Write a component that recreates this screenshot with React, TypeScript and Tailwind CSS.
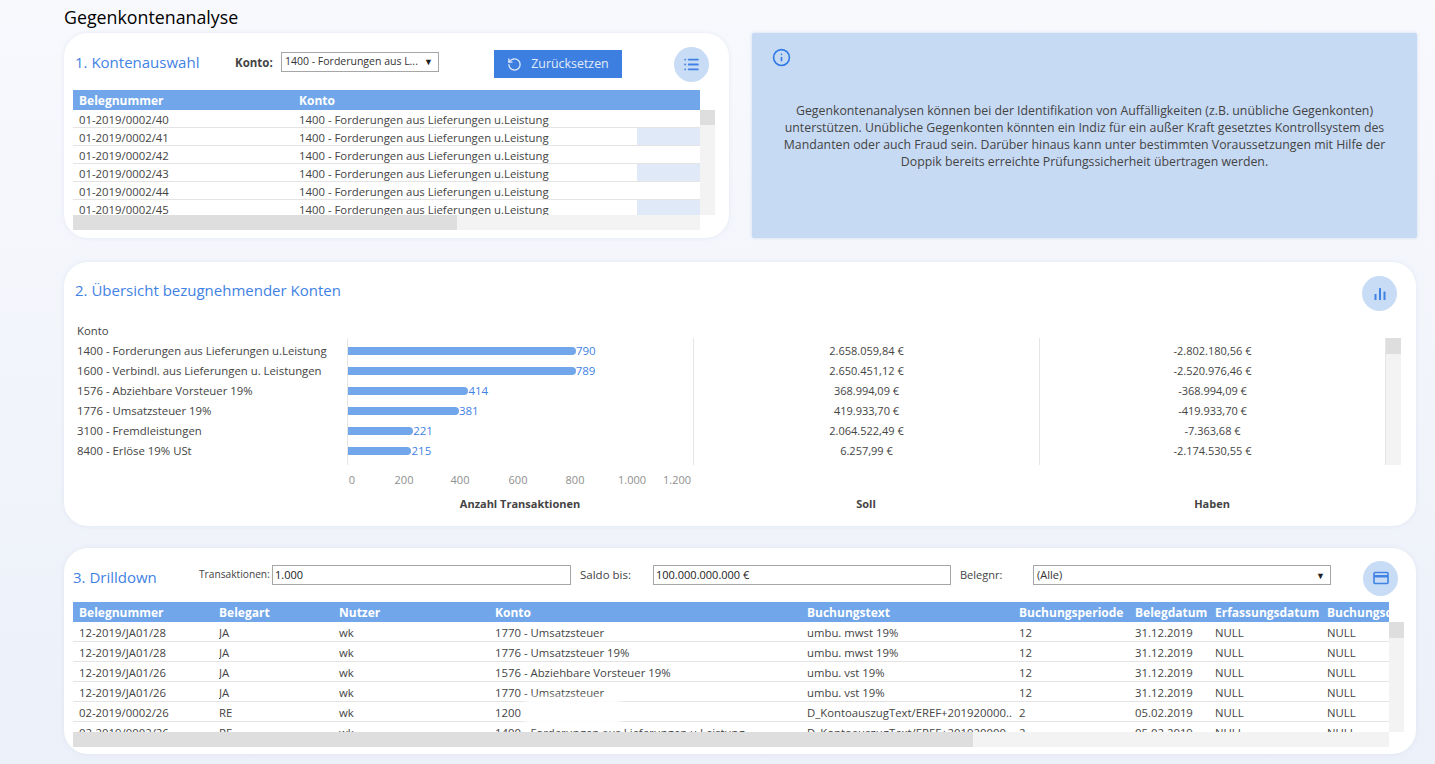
import { Info, List, RotateCcw } from "lucide-react";

const belege = ["40", "41", "42", "43", "44", "45"];

const konten = [
  { name: "1400 - Forderungen aus Lieferungen u.Leistung", count: 790, soll: "2.658.059,84 €", haben: "-2.802.180,56 €" },
  { name: "1600 - Verbindl. aus Lieferungen u. Leistungen", count: 789, soll: "2.650.451,12 €", haben: "-2.520.976,46 €" },
  { name: "1576 - Abziehbare Vorsteuer 19%", count: 414, soll: "368.994,09 €", haben: "-368.994,09 €" },
  { name: "1776 - Umsatzsteuer 19%", count: 381, soll: "419.933,70 €", haben: "-419.933,70 €" },
  { name: "3100 - Fremdleistungen", count: 221, soll: "2.064.522,49 €", haben: "-7.363,68 €" },
  { name: "8400 - Erlöse 19% USt", count: 215, soll: "6.257,99 €", haben: "-2.174.530,55 €" },
];

const drillHead = ["Belegnummer", "Belegart", "Nutzer", "Konto", "Buchungstext", "Buchungsperiode", "Belegdatum", "Erfassungsdatum", "Buchungsdatum"];

const drillRows = [
  ["12-2019/JA01/28", "JA", "wk", "1770 - Umsatzsteuer", "umbu. mwst 19%", "12", "31.12.2019", "NULL", "NULL"],
  ["12-2019/JA01/28", "JA", "wk", "1776 - Umsatzsteuer 19%", "umbu. mwst 19%", "12", "31.12.2019", "NULL", "NULL"],
  ["12-2019/JA01/26", "JA", "wk", "1576 - Abziehbare Vorsteuer 19%", "umbu. vst 19%", "12", "31.12.2019", "NULL", "NULL"],
  ["12-2019/JA01/26", "JA", "wk", "1770 - Umsatzsteuer", "umbu. vst 19%", "12", "31.12.2019", "NULL", "NULL"],
  ["02-2019/0002/26", "RE", "wk", "1200", "D_KontoauszugText/EREF+201920000..", "2", "05.02.2019", "NULL", "NULL"],
  ["02-2019/0002/26", "RE", "wk", "1400 - Forderungen aus Lieferungen u.Leistung", "D_KontoauszugText/EREF+201920000..", "2", "05.02.2019", "NULL", "NULL"],
];

const drillCols = "grid grid-cols-[146px_120px_156px_312px_212px_116px_80px_112px_62px]";

function RoundIcon({ children }: { children: React.ReactNode }) {
  return (
    <div className="flex h-[35px] w-[35px] shrink-0 items-center justify-center rounded-full bg-[#c9dcf6] text-[#3f82e4]">
      {children}
    </div>
  );
}

function SelectBox({ label, className }: { label: string; className: string }) {
  return (
    <div className={`flex items-center justify-between border border-[#a6a6a6] bg-white pl-[3px] pr-[5px] text-[#333] ${className}`}>
      <span className="whitespace-nowrap">{label}</span>
      <span className="text-[9px] text-[#222]">▼</span>
    </div>
  );
}

export default function App() {
  return (
    <div className="h-[764px] overflow-hidden bg-gradient-to-b from-[#f8f9fd] to-[#ecf0f9] pl-[64px] pr-[18px] font-['Open_Sans',sans-serif] text-[#444]">
      <h1 className="flex h-[33px] items-end pb-[3px] text-[17.8px] leading-[26px] text-black">Gegenkontenanalyse</h1>

      <div className="flex h-[205px] gap-[23px]">
        {/* 1. Kontenauswahl */}
        <section className="w-[665px] rounded-[24px] bg-white pl-[9px] pr-[14px] shadow-[0_0_4px_rgba(200,210,230,0.4)]">
          <div className="flex h-[57px] items-center">
            <h2 className="ml-[2px] w-[160px] pt-[2px] text-[15px] text-[#3f82e4]">1. Kontenauswahl</h2>
            <span className="w-[46px] pt-[2px] text-[11.5px] font-bold">Konto:</span>
            <SelectBox label="1400 - Forderungen aus L..." className="h-[20px] w-[158px] text-[10.5px]" />
            <button className="ml-[55px] mt-[5px] flex h-[28px] w-[128px] items-center justify-center gap-[9px] bg-[#3d7fe0] text-[12.4px] text-[#e3ecfa]">
              <RotateCcw size={15} strokeWidth={2} />
              Zurücksetzen
            </button>
            <div className="ml-[52px] mt-[5px]">
              <RoundIcon>
                <List size={17} strokeWidth={2.5} />
              </RoundIcon>
            </div>
          </div>

          <div className="flex flex-col">
            <div className="flex h-[20px] w-[627px] items-center bg-[#71a6ea] pt-[1px] text-[12px] font-bold text-white">
              <span className="w-[226px] pl-[6px]">Belegnummer</span>
              <span>Konto</span>
            </div>
            <div className="flex">
              <div className="h-[105px] w-[627px] overflow-hidden">
                {belege.map((n, i) => (
                  <div key={n} className="flex h-[18px] items-center border-b border-[#e4e4e4] text-[11.35px]">
                    <span className="w-[226px] pl-[6px] pt-[2px]">01-2019/0002/{n}</span>
                    <span className="w-[338px] whitespace-nowrap pt-[2px]">1400 - Forderungen aus Lieferungen u.Leistung</span>
                    <span className={`h-full w-[63px] ${i % 2 === 1 ? "bg-[#e0e9f8]" : ""}`} />
                  </div>
                ))}
              </div>
              <div className="h-[105px] w-[15px] bg-[#f3f3f3]">
                <div className="h-[15px] bg-[#dedede]" />
              </div>
            </div>
            <div className="h-[15px] w-[627px] bg-[#f3f3f3]">
              <div className="h-full w-[384px] bg-[#dedede]" />
            </div>
          </div>
        </section>

        {/* Hinweis */}
        <aside className="w-[665px] rounded-[2px] bg-[#c7daf4] px-[20px] pt-[15px] text-center shadow-[0_0_3px_rgba(160,185,225,0.5)]">
          <Info size={19} strokeWidth={2} className="text-[#2f7ae5]" />
          <p className="mt-[35px] text-[12.3px] leading-[17px] text-[#444]">
            Gegenkontenanalysen können bei der Identifikation von Auffälligkeiten (z.B. unübliche Gegenkonten)
            <br />
            unterstützen. Unübliche Gegenkonten könnten ein Indiz für ein außer Kraft gesetztes Kontrollsystem des
            <br />
            Mandanten oder auch Fraud sein. Darüber hinaus kann unter bestimmten Voraussetzungen mit Hilfe der
            <br />
            Doppik bereits erreichte Prüfungssicherheit übertragen werden.
          </p>
        </aside>
      </div>

      {/* 2. Übersicht */}
      <section className="mr-[1px] mt-[24px] h-[264px] rounded-[24px] bg-white pl-[11px] pr-[15px] shadow-[0_0_4px_rgba(200,210,230,0.4)]">
        <div className="flex h-[59px] items-center justify-between pr-[4px]">
          <h2 className="pb-[2px] text-[15px] text-[#3f82e4]">2. Übersicht bezugnehmender Konten</h2>
          <div className="mt-[4px]">
            <RoundIcon>
              <svg width="14" height="14" viewBox="0 0 14 14" fill="currentColor">
                <rect x="1.5" y="7" width="2" height="6" rx="0.5" />
                <rect x="6" y="1" width="2" height="12" rx="0.5" />
                <rect x="10.5" y="4.5" width="2" height="8.5" rx="0.5" />
              </svg>
            </RoundIcon>
          </div>
        </div>

        <div className="flex h-[144px] text-[11px]">
          <div className="w-[272px] shrink-0 pl-[2px] text-[11.35px]">
            <div className="flex h-[20px] items-center">Konto</div>
            {konten.map((k) => (
              <div key={k.name} className="flex h-[20px] items-center whitespace-nowrap">{k.name}</div>
            ))}
          </div>
          <div className="mt-[17px] w-[346px] shrink-0 border-l border-[#e6e6e6] pt-[3px]">
            {konten.map((k) => (
              <div key={k.name} className="flex h-[20px] items-center text-[11.5px] text-[#3f82e4]">
                <div className="h-[8px] rounded-r-full bg-[#71a6ea]" style={{ width: 2 + k.count * 0.286 }} />
                <span>{k.count}</span>
              </div>
            ))}
          </div>
          <div className="mt-[17px] w-[346px] shrink-0 border-l border-[#e6e6e6] pt-[3px]">
            {konten.map((k) => (
              <div key={k.name} className="flex h-[20px] items-center justify-center">{k.soll}</div>
            ))}
          </div>
          <div className="mt-[17px] w-[346px] shrink-0 border-l border-[#e6e6e6] pt-[3px]">
            {konten.map((k) => (
              <div key={k.name} className="flex h-[20px] items-center justify-center">{k.haben}</div>
            ))}
          </div>
          <div className="mt-[17px] h-[127px] w-[16px] border-l border-[#e6e6e6] bg-[#f3f3f3]">
            <div className="h-[16px] bg-[#dedede]" />
          </div>
        </div>

        <div className="mt-[5px] flex h-[20px] items-center pl-[272px] text-[11px] text-[#8f8f8f]">
          <span className="w-[10px] text-center">0</span>
          <span className="ml-[32px] w-[30px] text-center">200</span>
          <span className="ml-[26px] w-[30px] text-center">400</span>
          <span className="ml-[28px] w-[30px] text-center">600</span>
          <span className="ml-[27px] w-[30px] text-center">800</span>
          <span className="ml-[22px] w-[40px] text-center">1.000</span>
          <span className="ml-[5px] w-[40px] text-center">1.200</span>
        </div>
        <div className="mt-[4px] flex h-[20px] items-center pl-[272px] text-[11px] font-bold">
          <span className="w-[346px] text-center">Anzahl Transaktionen</span>
          <span className="w-[346px] text-center">Soll</span>
          <span className="w-[346px] text-center">Haben</span>
        </div>
      </section>

      {/* 3. Drilldown */}
      <section className="mr-[1px] mt-[22px] h-[206px] rounded-[24px] bg-white pl-[9px] shadow-[0_0_4px_rgba(200,210,230,0.4)]">
        <div className="flex h-[54px] items-center">
          <h2 className="w-[126px] pt-[4px] text-[15px] text-[#3f82e4]">3. Drilldown</h2>
          <span className="w-[73px] whitespace-nowrap text-[10.2px]">Transaktionen:</span>
          <div className="flex h-[20px] w-[299px] items-center border border-[#a6a6a6] px-[2px] pt-[1px] text-[11px] text-[#222]">1.000</div>
          <span className="ml-[9px] w-[73px] text-[11.5px]">Saldo bis:</span>
          <div className="flex h-[20px] w-[298px] items-center border border-[#a6a6a6] px-[2px] pt-[1px] text-[11px] text-[#222]">100.000.000.000 €</div>
          <span className="ml-[9px] w-[73px] text-[11px]">Belegnr:</span>
          <SelectBox label="(Alle)" className="h-[20px] w-[298px] pt-[1px] text-[11px]" />
          <div className="ml-[32px] mt-[6px]">
            <RoundIcon>
              <svg width="18" height="18" viewBox="0 0 18 18" fill="none" stroke="currentColor" strokeWidth="1.6">
                <rect x="2" y="3.5" width="14" height="11" rx="1" />
                <rect x="2" y="6" width="14" height="2.5" fill="currentColor" stroke="none" />
              </svg>
            </RoundIcon>
          </div>
        </div>

        <div className="w-[1316px] overflow-hidden">
          <div className={`${drillCols} h-[20px] items-center bg-[#71a6ea] pt-[1px] text-[12px] font-bold text-white`}>
            {drillHead.map((h) => (
              <span key={h} className="overflow-hidden whitespace-nowrap first:pl-[6px]">{h}</span>
            ))}
          </div>
        </div>
        <div className="flex">
          <div className="relative h-[110px] w-[1316px] overflow-hidden">
            {drillRows.map((row, i) => (
              <div key={i} className={`${drillCols} h-[20px] items-center border-b border-[#e4e4e4] text-[11.35px]`}>
                {row.map((c, j) => (
                  <span key={j} className="overflow-hidden whitespace-nowrap pt-[2px] first:pl-[6px]">{c}</span>
                ))}
              </div>
            ))}
            {/* geschwärzter Bereich im Kontonamen */}
            <div className="absolute left-[452px] top-[76px] h-[27px] w-[96px] bg-white blur-[3px]" />
          </div>
          <div className="h-[110px] w-[15px] bg-[#f3f3f3]">
            <div className="h-[16px] bg-[#dedede]" />
          </div>
        </div>
        <div className="h-[15px] w-[1316px] bg-[#f3f3f3]">
          <div className="h-full w-[900px] bg-[#dedede]" />
        </div>
      </section>
    </div>
  );
}
